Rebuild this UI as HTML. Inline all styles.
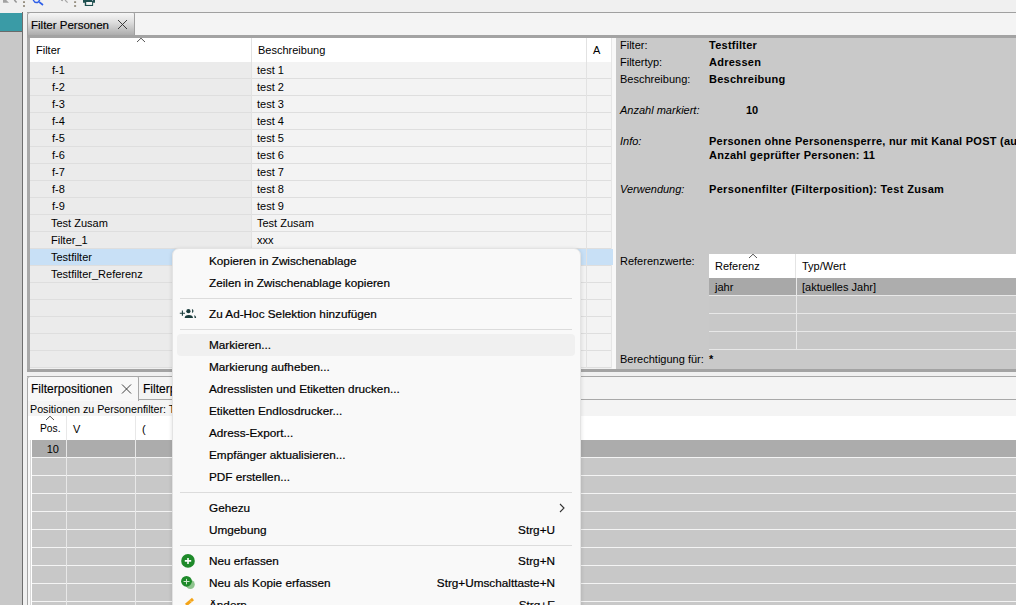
<!DOCTYPE html>
<html><head><meta charset="utf-8"><title>Filter Personen</title>
<style>
html,body{margin:0;padding:0;}
body{width:1016px;height:605px;overflow:hidden;position:relative;background:#f0f0f0;font-family:"Liberation Sans",sans-serif;color:#000;}
div,span,svg{position:absolute;}
.t{white-space:pre;}
.b{font-weight:bold;}
.i{font-style:italic;}
</style></head><body>

<svg style="left:0;top:0" width="120" height="12" viewBox="0 0 120 12"><path d="M3 0 L6.2 0 L9 2.8 L3 2.8 Z" fill="#a2a2a2"/><path d="M14.3 0 L16.6 2.4" stroke="#959595" stroke-width="1.5" fill="none"/><rect x="23" y="1.3" width="2" height="1.6" fill="#8c8474"/><rect x="23" y="5.2" width="2" height="1.6" fill="#8c8474"/><path d="M33.2 0 Q34.5 2.6 36.5 2.6 Q38.6 2.6 39.6 0" stroke="#2e5fe8" stroke-width="1.5" fill="none"/><path d="M39.2 2 L43 5" stroke="#2e5fe8" stroke-width="1.6"/><path d="M61 0.2 L63 0.6 M65 0 L67.6 2.6" stroke="#a8a8a8" stroke-width="1.2" fill="none"/><rect x="74.1" y="1.3" width="2" height="1.6" fill="#8c8474"/><rect x="74.1" y="5.2" width="2" height="1.6" fill="#8c8474"/><path d="M83 0 L95 0 L95 2.7 L93.1 2.7 L93.1 5.9 L84.8 5.9 L84.8 2.7 L83 2.7 Z" fill="#1e4f4f"/><rect x="86.2" y="2" width="5.9" height="2.9" fill="#f4f4f4"/><rect x="92" y="0" width="1" height="1" fill="#9ab"/></svg>
<div style="left:0px;top:13px;width:22px;height:18px;background:#3a9ba6;"></div>
<div style="left:0px;top:31px;width:22px;height:1px;background:#6a6a6a;"></div>
<div style="left:0px;top:32px;width:22px;height:573px;background:#c8c8c8;"></div>
<div style="left:22px;top:12px;width:1px;height:593px;background:#6e6e6e;"></div>
<div style="left:27px;top:12px;width:989px;height:1px;background:#a0a0a0;"></div>
<div style="left:27px;top:13px;width:989px;height:22px;background:#f4f4f4;"></div>
<div style="left:27px;top:12px;width:106px;height:23px;border:1px solid #a0a0a0;border-bottom:none;border-radius:3px 2px 0 0;background:linear-gradient(#f6f6f6,#dedede 40%,#a9a9a9);"></div>
<span class="t " style="left:31px;top:18px;font-size:11.5px;line-height:14px;color:#000;-webkit-text-stroke:0.15px #000">Filter Personen</span>
<svg style="left:117px;top:19px" width="11" height="11" viewBox="0 0 11 11"><path d="M1 1 L10 10 M10 1 L1 10" stroke="#2a2a2a" stroke-width="0.9"/></svg>
<div style="left:27px;top:35px;width:989px;height:3px;background:#a3a3a3;"></div>
<div style="left:27px;top:38px;width:3px;height:333px;background:#a8a8a8;"></div>
<div style="left:30px;top:38px;width:582px;height:24px;background:#ffffff;"></div>
<span class="t " style="left:36px;top:43px;font-size:11px;line-height:14px;">Filter</span>
<span class="t " style="left:258px;top:43px;font-size:11px;line-height:14px;">Beschreibung</span>
<span class="t " style="left:593px;top:43px;font-size:11px;line-height:14px;">A</span>
<svg style="left:136px;top:37px" width="10" height="6" viewBox="0 0 10 6"><path d="M1 5 L5 1.2 L9 5" stroke="#555" stroke-width="1" fill="none"/></svg>
<div style="left:30px;top:62px;width:221px;height:16px;background:#ebebeb;"></div>
<div style="left:252px;top:62px;width:360px;height:16px;background:#f3f3f3;"></div>
<div style="left:30px;top:78px;width:582px;height:1px;background:#dedede;"></div>
<span class="t " style="left:52px;top:63px;font-size:11px;line-height:14px;">f-1</span>
<span class="t " style="left:257px;top:63px;font-size:11px;line-height:14px;">test 1</span>
<div style="left:30px;top:79px;width:221px;height:16px;background:#ebebeb;"></div>
<div style="left:252px;top:79px;width:360px;height:16px;background:#f3f3f3;"></div>
<div style="left:30px;top:95px;width:582px;height:1px;background:#dedede;"></div>
<span class="t " style="left:52px;top:80px;font-size:11px;line-height:14px;">f-2</span>
<span class="t " style="left:257px;top:80px;font-size:11px;line-height:14px;">test 2</span>
<div style="left:30px;top:96px;width:221px;height:16px;background:#ebebeb;"></div>
<div style="left:252px;top:96px;width:360px;height:16px;background:#f3f3f3;"></div>
<div style="left:30px;top:112px;width:582px;height:1px;background:#dedede;"></div>
<span class="t " style="left:52px;top:97px;font-size:11px;line-height:14px;">f-3</span>
<span class="t " style="left:257px;top:97px;font-size:11px;line-height:14px;">test 3</span>
<div style="left:30px;top:113px;width:221px;height:16px;background:#ebebeb;"></div>
<div style="left:252px;top:113px;width:360px;height:16px;background:#f3f3f3;"></div>
<div style="left:30px;top:129px;width:582px;height:1px;background:#dedede;"></div>
<span class="t " style="left:52px;top:114px;font-size:11px;line-height:14px;">f-4</span>
<span class="t " style="left:257px;top:114px;font-size:11px;line-height:14px;">test 4</span>
<div style="left:30px;top:130px;width:221px;height:16px;background:#ebebeb;"></div>
<div style="left:252px;top:130px;width:360px;height:16px;background:#f3f3f3;"></div>
<div style="left:30px;top:146px;width:582px;height:1px;background:#dedede;"></div>
<span class="t " style="left:52px;top:131px;font-size:11px;line-height:14px;">f-5</span>
<span class="t " style="left:257px;top:131px;font-size:11px;line-height:14px;">test 5</span>
<div style="left:30px;top:147px;width:221px;height:16px;background:#ebebeb;"></div>
<div style="left:252px;top:147px;width:360px;height:16px;background:#f3f3f3;"></div>
<div style="left:30px;top:163px;width:582px;height:1px;background:#dedede;"></div>
<span class="t " style="left:52px;top:148px;font-size:11px;line-height:14px;">f-6</span>
<span class="t " style="left:257px;top:148px;font-size:11px;line-height:14px;">test 6</span>
<div style="left:30px;top:164px;width:221px;height:16px;background:#ebebeb;"></div>
<div style="left:252px;top:164px;width:360px;height:16px;background:#f3f3f3;"></div>
<div style="left:30px;top:180px;width:582px;height:1px;background:#dedede;"></div>
<span class="t " style="left:52px;top:165px;font-size:11px;line-height:14px;">f-7</span>
<span class="t " style="left:257px;top:165px;font-size:11px;line-height:14px;">test 7</span>
<div style="left:30px;top:181px;width:221px;height:16px;background:#ebebeb;"></div>
<div style="left:252px;top:181px;width:360px;height:16px;background:#f3f3f3;"></div>
<div style="left:30px;top:197px;width:582px;height:1px;background:#dedede;"></div>
<span class="t " style="left:52px;top:182px;font-size:11px;line-height:14px;">f-8</span>
<span class="t " style="left:257px;top:182px;font-size:11px;line-height:14px;">test 8</span>
<div style="left:30px;top:198px;width:221px;height:16px;background:#ebebeb;"></div>
<div style="left:252px;top:198px;width:360px;height:16px;background:#f3f3f3;"></div>
<div style="left:30px;top:214px;width:582px;height:1px;background:#dedede;"></div>
<span class="t " style="left:52px;top:199px;font-size:11px;line-height:14px;">f-9</span>
<span class="t " style="left:257px;top:199px;font-size:11px;line-height:14px;">test 9</span>
<div style="left:30px;top:215px;width:221px;height:16px;background:#ebebeb;"></div>
<div style="left:252px;top:215px;width:360px;height:16px;background:#f3f3f3;"></div>
<div style="left:30px;top:231px;width:582px;height:1px;background:#dedede;"></div>
<span class="t " style="left:51px;top:216px;font-size:11px;line-height:14px;">Test Zusam</span>
<span class="t " style="left:257px;top:216px;font-size:11px;line-height:14px;">Test Zusam</span>
<div style="left:30px;top:232px;width:221px;height:16px;background:#ebebeb;"></div>
<div style="left:252px;top:232px;width:360px;height:16px;background:#f3f3f3;"></div>
<div style="left:30px;top:248px;width:582px;height:1px;background:#dedede;"></div>
<span class="t " style="left:51px;top:233px;font-size:11px;line-height:14px;">Filter_1</span>
<span class="t " style="left:257px;top:233px;font-size:11px;line-height:14px;">xxx</span>
<div style="left:30px;top:249px;width:582px;height:16px;background:#c8e0f6;"></div>
<div style="left:30px;top:265px;width:582px;height:1px;background:#dedede;"></div>
<span class="t " style="left:51px;top:250px;font-size:11px;line-height:14px;">Testfilter</span>
<div style="left:30px;top:266px;width:221px;height:16px;background:#ebebeb;"></div>
<div style="left:252px;top:266px;width:360px;height:16px;background:#f3f3f3;"></div>
<div style="left:30px;top:282px;width:582px;height:1px;background:#dedede;"></div>
<span class="t " style="left:51px;top:267px;font-size:11px;line-height:14px;">Testfilter_Referenz</span>
<div style="left:30px;top:283px;width:221px;height:16px;background:#ebebeb;"></div>
<div style="left:252px;top:283px;width:360px;height:16px;background:#f3f3f3;"></div>
<div style="left:30px;top:299px;width:582px;height:1px;background:#dedede;"></div>
<div style="left:30px;top:300px;width:221px;height:16px;background:#ebebeb;"></div>
<div style="left:252px;top:300px;width:360px;height:16px;background:#f3f3f3;"></div>
<div style="left:30px;top:316px;width:582px;height:1px;background:#dedede;"></div>
<div style="left:30px;top:317px;width:221px;height:16px;background:#ebebeb;"></div>
<div style="left:252px;top:317px;width:360px;height:16px;background:#f3f3f3;"></div>
<div style="left:30px;top:333px;width:582px;height:1px;background:#dedede;"></div>
<div style="left:30px;top:334px;width:221px;height:16px;background:#ebebeb;"></div>
<div style="left:252px;top:334px;width:360px;height:16px;background:#f3f3f3;"></div>
<div style="left:30px;top:350px;width:582px;height:1px;background:#dedede;"></div>
<div style="left:30px;top:351px;width:221px;height:16px;background:#ebebeb;"></div>
<div style="left:252px;top:351px;width:360px;height:16px;background:#f3f3f3;"></div>
<div style="left:30px;top:367px;width:582px;height:1px;background:#dedede;"></div>
<div style="left:251px;top:38px;width:1px;height:330px;background:#e2e2e2;"></div>
<div style="left:586px;top:38px;width:1px;height:330px;background:#e2e2e2;"></div>
<div style="left:611px;top:38px;width:1px;height:330px;background:#e6e6e6;"></div>
<div style="left:612px;top:38px;width:4px;height:331px;background:#f8f8f8;"></div>
<div style="left:611px;top:249px;width:2px;height:16px;background:#c8e0f6;"></div>
<div style="left:616px;top:38px;width:400px;height:331px;background:#c9c9c9;"></div>
<div style="left:27px;top:369px;width:989px;height:3px;background:#a3a3a3;"></div>
<span class="t " style="left:620px;top:38px;font-size:11px;line-height:14px;">Filter:</span>
<span class="t b" style="left:709px;top:38px;font-size:11px;line-height:14px;letter-spacing:0.25px">Testfilter</span>
<span class="t " style="left:620px;top:55px;font-size:11px;line-height:14px;">Filtertyp:</span>
<span class="t b" style="left:709px;top:55px;font-size:11px;line-height:14px;letter-spacing:0.25px">Adressen</span>
<span class="t " style="left:620px;top:72px;font-size:11px;line-height:14px;">Beschreibung:</span>
<span class="t b" style="left:709px;top:72px;font-size:11px;line-height:14px;letter-spacing:0.25px">Beschreibung</span>
<span class="t i" style="left:620px;top:103px;font-size:11px;line-height:14px;">Anzahl markiert:</span>
<span class="t b" style="left:746px;top:103px;font-size:11px;line-height:14px;">10</span>
<span class="t i" style="left:620px;top:134px;font-size:11px;line-height:14px;">Info:</span>
<span class="t b" style="left:709px;top:134px;font-size:11px;line-height:14px;letter-spacing:0.25px">Personen ohne Personensperre, nur mit Kanal POST (auch ohne Adresse)</span>
<span class="t b" style="left:709px;top:148px;font-size:11px;line-height:14px;letter-spacing:0.25px">Anzahl geprüfter Personen: 11</span>
<span class="t i" style="left:620px;top:182px;font-size:11px;line-height:14px;">Verwendung:</span>
<span class="t b" style="left:709px;top:182px;font-size:11px;line-height:14px;letter-spacing:0.33px">Personenfilter (Filterposition): Test Zusam</span>
<span class="t " style="left:620px;top:254px;font-size:11px;line-height:14px;">Referenzwerte:</span>
<div style="left:709px;top:254px;width:307px;height:24px;background:#ffffff;"></div>
<span class="t " style="left:715px;top:259px;font-size:11px;line-height:14px;">Referenz</span>
<span class="t " style="left:802px;top:259px;font-size:11px;line-height:14px;">Typ/Wert</span>
<svg style="left:748px;top:253px" width="10" height="6" viewBox="0 0 10 6"><path d="M1 5 L5 1.2 L9 5" stroke="#555" stroke-width="1" fill="none"/></svg>
<div style="left:709px;top:278px;width:307px;height:17px;background:#adadad;"></div>
<div style="left:709px;top:278px;width:87px;height:17px;background:#a8a8a8;"></div>
<span class="t " style="left:715px;top:280px;font-size:11px;line-height:14px;">jahr</span>
<span class="t " style="left:802px;top:280px;font-size:11px;line-height:14px;">[aktuelles Jahr]</span>
<div style="left:709px;top:296px;width:307px;height:17px;background:#c8c8c8;"></div>
<div style="left:709px;top:314px;width:307px;height:17px;background:#c8c8c8;"></div>
<div style="left:709px;top:332px;width:307px;height:17px;background:#c8c8c8;"></div>
<div style="left:709px;top:295px;width:307px;height:1px;background:#e8e8e8;"></div>
<div style="left:709px;top:313px;width:307px;height:1px;background:#e8e8e8;"></div>
<div style="left:709px;top:331px;width:307px;height:1px;background:#e8e8e8;"></div>
<div style="left:709px;top:349px;width:307px;height:1px;background:#e8e8e8;"></div>
<div style="left:795px;top:254px;width:1px;height:24px;background:#e4e4e4;"></div>
<div style="left:796px;top:278px;width:1px;height:72px;background:#e8e8e8;"></div>
<span class="t " style="left:620px;top:352px;font-size:11px;line-height:14px;">Berechtigung für:</span>
<span class="t b" style="left:709px;top:352px;font-size:11px;line-height:14px;">*</span>
<div style="left:27px;top:376px;width:989px;height:1px;background:#a8a8a8;"></div>
<div style="left:27px;top:377px;width:989px;height:229px;background:#f4f4f4;"></div>
<div style="left:27px;top:376px;width:110px;height:24px;border:1px solid #a8a8a8;border-bottom:none;border-radius:3px 2px 0 0;background:#f8f8f8;"></div>
<div style="left:138px;top:399px;width:878px;height:1px;background:#a8a8a8;"></div>
<span class="t " style="left:31px;top:382px;font-size:12px;line-height:14px;color:#000;-webkit-text-stroke:0.15px #000">Filterpositionen</span>
<svg style="left:121px;top:384px" width="11" height="10" viewBox="0 0 11 10"><path d="M1 0.5 L10 9.5 M10 0.5 L1 9.5" stroke="#2a2a2a" stroke-width="0.9"/></svg>
<span class="t " style="left:143px;top:382px;font-size:12px;line-height:14px;color:#000;-webkit-text-stroke:0.15px #000">Filterpositionen</span>
<span class="t " style="left:30px;top:402px;font-size:10.7px;line-height:14px;">Positionen zu Personenfilter: Testfilter</span>
<div style="left:27px;top:400px;width:1px;height:205px;background:#a4a4a4;"></div>
<div style="left:28px;top:416px;width:2px;height:189px;background:#f8f8f8;"></div>
<div style="left:28px;top:416px;width:988px;height:24px;background:#ffffff;"></div>
<div style="left:30px;top:440px;width:1px;height:165px;background:#d8d8d8;"></div>
<div style="left:31px;top:440px;width:1px;height:165px;background:#ffffff;"></div>
<div style="left:32px;top:440px;width:984px;height:17px;background:#acacac;"></div>
<div style="left:32px;top:458px;width:984px;height:17px;background:#c8c8c8;"></div>
<div style="left:32px;top:476px;width:984px;height:17px;background:#c8c8c8;"></div>
<div style="left:32px;top:494px;width:984px;height:17px;background:#c8c8c8;"></div>
<div style="left:32px;top:512px;width:984px;height:17px;background:#c8c8c8;"></div>
<div style="left:32px;top:530px;width:984px;height:17px;background:#c8c8c8;"></div>
<div style="left:32px;top:548px;width:984px;height:17px;background:#c8c8c8;"></div>
<div style="left:32px;top:566px;width:984px;height:17px;background:#c8c8c8;"></div>
<div style="left:32px;top:584px;width:984px;height:17px;background:#c8c8c8;"></div>
<div style="left:32px;top:602px;width:984px;height:17px;background:#c8c8c8;"></div>
<div style="left:66px;top:416px;width:1px;height:189px;background:#e8e8e8;"></div>
<div style="left:135px;top:416px;width:1px;height:189px;background:#e8e8e8;"></div>
<span class="t " style="left:40px;top:422px;font-size:10.3px;line-height:14px;">Pos.</span>
<span class="t " style="left:73px;top:422px;font-size:11px;line-height:14px;">V</span>
<span class="t " style="left:142px;top:422px;font-size:11px;line-height:14px;">(</span>
<svg style="left:45px;top:415px" width="10" height="6" viewBox="0 0 10 6"><path d="M1 5 L5 1.2 L9 5" stroke="#555" stroke-width="1" fill="none"/></svg>
<span class="t " style="right:957px;top:442px;font-size:11px;line-height:14px;">10</span>
<div style="left:172px;top:248px;width:409px;height:380px;background:#f9f9f9;border:1px solid #e3e3e3;box-sizing:border-box;border-radius:7px;box-shadow:0 1px 4px rgba(0,0,0,0.13);"></div>
<span class="t " style="left:209px;top:254px;font-size:11.75px;line-height:14px;color:#000;-webkit-text-stroke:0.2px #000">Kopieren in Zwischenablage</span>
<span class="t " style="left:209px;top:276px;font-size:11.75px;line-height:14px;color:#000;-webkit-text-stroke:0.2px #000">Zeilen in Zwischenablage kopieren</span>
<div style="left:180px;top:298px;width:392px;height:1px;background:#dcdcdc;"></div>
<span class="t " style="left:209px;top:307px;font-size:11.75px;line-height:14px;color:#000;-webkit-text-stroke:0.2px #000">Zu Ad-Hoc Selektion hinzufügen</span>
<svg style="left:175px;top:300px" width="30" height="25" viewBox="0 0 30 25"><path d="M4.8 13.2 H10 M7.4 10.6 V15.8" stroke="#1a3c3c" stroke-width="1.1"/><circle cx="13.4" cy="11.2" r="2.1" fill="#1a3c3c"/><path d="M16.9 8.9 A2.05 2.05 0 0 1 16.9 12.9 A8 8 0 0 0 16.9 8.9 Z" fill="#1a3c3c"/><path d="M9.7 18 Q9.7 15.1 13.8 15.1 Q17.9 15.1 18 18 Z" fill="#1a3c3c"/><path d="M19 15.3 Q21 15.6 21.2 18 L19.6 18 Q19.6 16.2 19 15.3 Z" fill="#1a3c3c"/></svg>
<div style="left:180px;top:329px;width:392px;height:1px;background:#dcdcdc;"></div>
<div style="left:177px;top:334px;width:398px;height:22px;background:#f0f0f0;border-radius:4px;"></div>
<span class="t " style="left:209px;top:338px;font-size:11.75px;line-height:14px;color:#000;-webkit-text-stroke:0.2px #000">Markieren...</span>
<span class="t " style="left:209px;top:360px;font-size:11.75px;line-height:14px;color:#000;-webkit-text-stroke:0.2px #000">Markierung aufheben...</span>
<span class="t " style="left:209px;top:382px;font-size:11.75px;line-height:14px;color:#000;-webkit-text-stroke:0.2px #000">Adresslisten und Etiketten drucken...</span>
<span class="t " style="left:209px;top:404px;font-size:11.75px;line-height:14px;color:#000;-webkit-text-stroke:0.2px #000">Etiketten Endlosdrucker...</span>
<span class="t " style="left:209px;top:426px;font-size:11.75px;line-height:14px;color:#000;-webkit-text-stroke:0.2px #000">Adress-Export...</span>
<span class="t " style="left:209px;top:448px;font-size:11.75px;line-height:14px;color:#000;-webkit-text-stroke:0.2px #000">Empfänger aktualisieren...</span>
<span class="t " style="left:209px;top:470px;font-size:11.75px;line-height:14px;color:#000;-webkit-text-stroke:0.2px #000">PDF erstellen...</span>
<div style="left:180px;top:492px;width:392px;height:1px;background:#dcdcdc;"></div>
<span class="t " style="left:209px;top:501px;font-size:11.75px;line-height:14px;color:#000;-webkit-text-stroke:0.2px #000">Gehezu</span>
<svg style="left:558px;top:503px" width="8" height="10" viewBox="0 0 8 10"><path d="M2 1 L6 5 L2 9" stroke="#333" stroke-width="1.1" fill="none"/></svg>
<span class="t " style="left:209px;top:523px;font-size:11.75px;line-height:14px;color:#000;-webkit-text-stroke:0.2px #000">Umgebung</span>
<span class="t " style="right:461px;top:523px;font-size:11.75px;line-height:14px;color:#000;-webkit-text-stroke:0.2px #000">Strg+U</span>
<div style="left:180px;top:545px;width:392px;height:1px;background:#dcdcdc;"></div>
<span class="t " style="left:209px;top:554px;font-size:11.75px;line-height:14px;color:#000;-webkit-text-stroke:0.2px #000">Neu erfassen</span>
<span class="t " style="right:461px;top:554px;font-size:11.75px;line-height:14px;color:#000;-webkit-text-stroke:0.2px #000">Strg+N</span>
<svg style="left:175px;top:550px" width="30" height="20" viewBox="0 0 30 20"><circle cx="13" cy="10.9" r="6.8" fill="#1e8a2a"/><path d="M13 8 V14 M9.8 10.9 H16.2" stroke="#fff" stroke-width="1.6"/></svg>
<span class="t " style="left:209px;top:576px;font-size:11.75px;line-height:14px;color:#000;-webkit-text-stroke:0.2px #000">Neu als Kopie erfassen</span>
<span class="t " style="right:461px;top:576px;font-size:11.75px;line-height:14px;color:#000;-webkit-text-stroke:0.2px #000">Strg+Umschalttaste+N</span>
<svg style="left:175px;top:570px" width="30" height="22" viewBox="0 0 30 22"><circle cx="15.3" cy="14.5" r="4.5" fill="#8ec48e"/><circle cx="11.5" cy="11.3" r="5.4" fill="#1e8a2a"/><path d="M11.5 8.9 V14.3 M8.6 11.5 H14.5" stroke="#cfe8cf" stroke-width="1"/></svg>
<span class="t " style="left:209px;top:598px;font-size:11.75px;line-height:14px;color:#000;-webkit-text-stroke:0.2px #000">Ändern</span>
<span class="t " style="right:461px;top:598px;font-size:11.75px;line-height:14px;color:#000;-webkit-text-stroke:0.2px #000">Strg+E</span>
<svg style="left:175px;top:590px" width="30" height="15" viewBox="0 0 30 15"><path d="M11 15 L18 9" stroke="#f4a418" stroke-width="3"/><path d="M15.2 10.6 L16.6 12" stroke="#fde3a8" stroke-width="0.8"/></svg>
</body></html>
